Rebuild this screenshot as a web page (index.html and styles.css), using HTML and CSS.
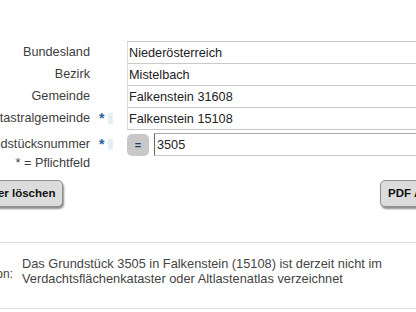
FILE: index.html
```html
<!DOCTYPE html>
<html lang="de">
<head>
<meta charset="utf-8">
<title>Altlastenabfrage</title>
<link rel="stylesheet" href="styles.css">
</head>
<body>
<div class="page">
  <div class="form">
    <div class="row">
      <div class="label">Bundesland</div>
      <div class="mark"></div>
      <div class="field">Niederösterreich</div>
    </div>
    <div class="row">
      <div class="label">Bezirk</div>
      <div class="mark"></div>
      <div class="field">Mistelbach</div>
    </div>
    <div class="row">
      <div class="label">Gemeinde</div>
      <div class="mark"></div>
      <div class="field">Falkenstein 31608</div>
    </div>
    <div class="row">
      <div class="label">Katastralgemeinde</div>
      <div class="mark"><span class="star">*</span><span class="info">i</span></div>
      <div class="field">Falkenstein 15108</div>
    </div>
    <div class="row row-parcel">
      <div class="label">Grundstücksnummer</div>
      <div class="mark"><span class="star">*</span><span class="info">i</span></div>
      <div class="field-group">
        <button class="eq" type="button">=</button>
        <div class="field field-active">3505</div>
      </div>
    </div>
    <div class="note"><span>* = Pflichtfeld</span></div>
  </div>

  <div class="actions">
    <button class="btn btn-clear" type="button">Alle Felder löschen</button>
    <button class="btn btn-pdf" type="button">PDF Anzeigen</button>
  </div>

  <div class="result">
    <div class="result-label"><span>Information:</span></div>
    <div class="result-text">Das Grundstück 3505 in Falkenstein (15108) ist derzeit nicht im Verdachtsflächenkataster oder Altlastenatlas verzeichnet</div>
  </div>
</div>
</body>
</html>
```

FILE: styles.css
```css
html, body {
  margin: 0;
  padding: 0;
  background: #ffffff;
  overflow: hidden;
}

body {
  font-family: "Liberation Sans", Arial, sans-serif;
  color: #333333;
  font-size: 13px;
}

.page {
  width: 416px;
  height: 312px;
  overflow: hidden;
  padding-top: 41px;
  box-sizing: border-box;
}

.form {
  display: flex;
  flex-direction: column;
}

.row {
  display: flex;
  align-items: center;
  height: 23px;
}

.row + .row {
  margin-top: -1px;
}

.row.row-parcel {
  margin-top: 3px;
}

.label {
  width: 90px;
  flex: none;
  display: flex;
  justify-content: flex-end;
  white-space: nowrap;
  color: #3d3d3d;
  font-size: 12.7px;
  margin-top: -1px;
}

.mark {
  width: 37px;
  flex: none;
  box-sizing: border-box;
  padding-left: 9px;
  display: flex;
  align-items: center;
  gap: 4px;
  height: 100%;
}

.star {
  color: #245e9c;
  font-weight: bold;
  font-size: 14px;
  line-height: 14px;
  margin-top: -1px;
}

.info {
  width: 5px;
  height: 11px;
  background: #e8f0f7;
  color: #d4e1ed;
  font-size: 8px;
  line-height: 11px;
  text-align: center;
  overflow: hidden;
}

.field {
  flex: 1;
  height: 100%;
  box-sizing: border-box;
  border-top: 1px solid #c9c9c9;
  border-bottom: 1px solid #c9c9c9;
  border-left: 1px solid #dcdcdc;
  background: #ffffff;
  padding-left: 1px;
  display: flex;
  align-items: center;
  color: #222222;
  font-size: 12.7px;
  white-space: nowrap;
}

.field-group {
  flex: 1;
  height: 100%;
  display: flex;
  align-items: center;
  gap: 5px;
}

.eq {
  width: 22px;
  height: 22px;
  flex: none;
  border: none;
  border-radius: 5px;
  background: #c8c8c8;
  color: #1d3f6b;
  font-family: "Liberation Sans", Arial, sans-serif;
  font-weight: bold;
  font-size: 11px;
  padding: 0;
}

.field-active {
  border-left: 1px solid #6b6b6b;
  border-top: 1px solid #a9a9a9;
  padding-left: 2px;
}

.note {
  width: 90px;
  display: flex;
  justify-content: flex-end;
  white-space: nowrap;
  line-height: 15px;
  color: #3d3d3d;
  font-size: 12.7px;
}

.actions {
  display: flex;
  justify-content: space-between;
  margin-top: 9px;
  margin-left: -58px;
  margin-right: -57px;
}

.btn {
  font-family: "Liberation Sans", Arial, sans-serif;
  font-weight: bold;
  font-size: 11.5px;
  line-height: 13px;
  color: #111111;
  background: #dcdcdc;
  border: 1px solid #8f8f8f;
  border-radius: 5px;
  padding: 6px 7px;
  box-shadow: 1px 2px 2px rgba(0, 0, 0, 0.45);
  white-space: nowrap;
}

.result {
  margin-top: 35px;
  border-top: 1px solid #dddddd;
  border-bottom: 1px solid #dddddd;
  display: flex;
  align-items: center;
  gap: 9px;
  padding: 13px 0 22px 0;
  color: #444444;
}

.result-label {
  width: 13px;
  flex: none;
  display: flex;
  justify-content: flex-end;
  white-space: nowrap;
  font-size: 12px;
  margin-top: 6px;
}

.result-text {
  flex: 1;
  font-size: 12.8px;
  line-height: 15px;
}
```
